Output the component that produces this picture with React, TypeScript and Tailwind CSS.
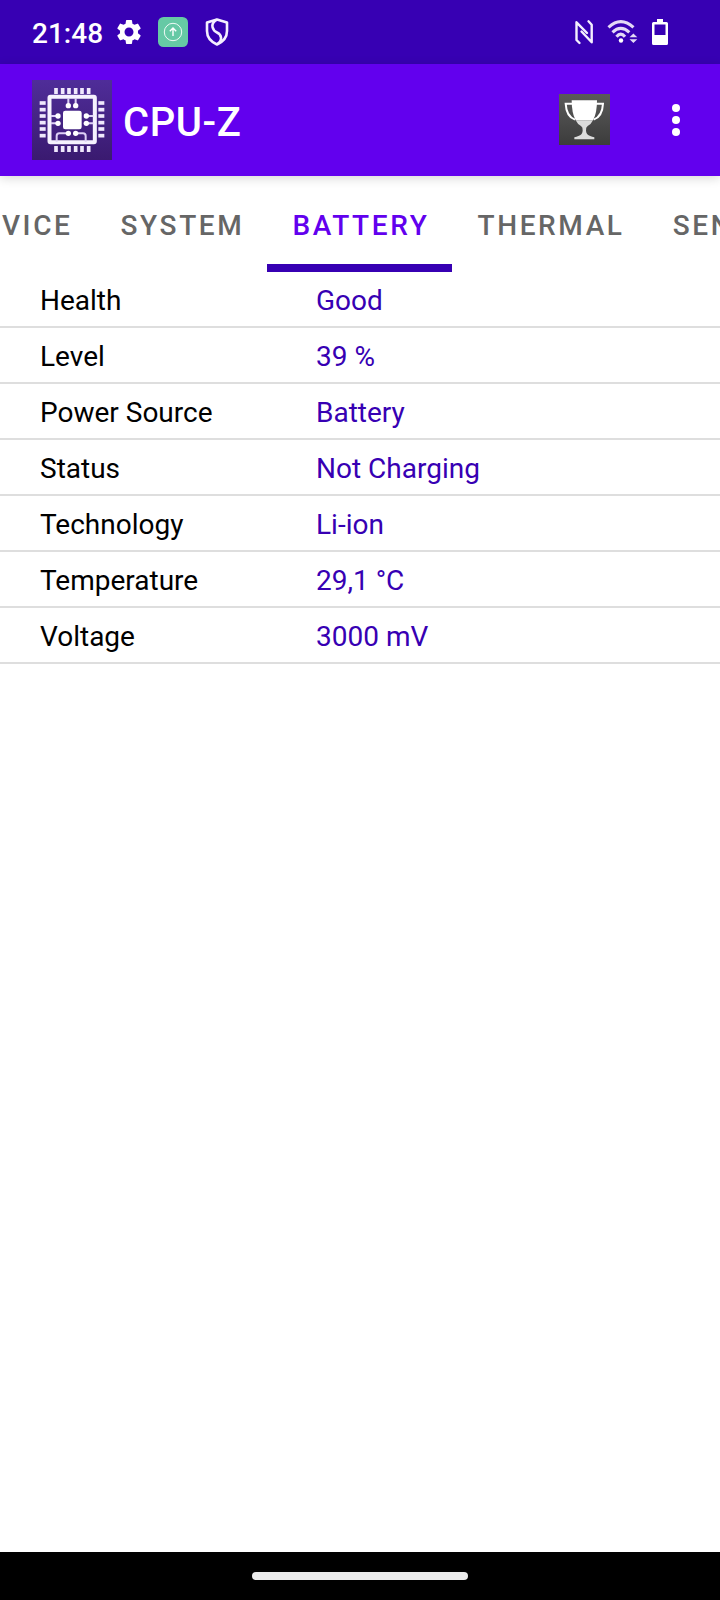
import { MdSettings } from "react-icons/md";

type Reading = {
    label: string;
    value: string;
};

const tabs = ["DEVICE", "SYSTEM", "BATTERY", "THERMAL", "SENSORS"];

const readings: Reading[] = [
    { label: "Health", value: "Good" },
    { label: "Level", value: "39 %" },
    { label: "Power Source", value: "Battery" },
    { label: "Status", value: "Not Charging" },
    { label: "Technology", value: "Li-ion" },
    { label: "Temperature", value: "29,1 °C" },
    { label: "Voltage", value: "3000 mV" },
];

const pins = [72, 92, 111, 131, 150, 170];

function ChipLogo() {
    return (
        <svg viewBox="0 0 240 240" className="h-20 w-20 shrink-0">
            <defs>
                <linearGradient id="chipBg" x1="0" y1="0" x2="0" y2="1">
                    <stop offset="0" stopColor="#4f2d99" />
                    <stop offset="1" stopColor="#3a1a70" />
                </linearGradient>
                <filter id="chipSoft">
                    <feGaussianBlur stdDeviation="2.2" />
                </filter>
            </defs>
            <rect width="240" height="240" fill="url(#chipBg)" />
            <g filter="url(#chipSoft)">
                <g fill="#efe8fc">
                    {pins.map((p) => (
                        <g key={p}>
                            <rect x={p - 5.5} y="24" width="11" height="18" />
                            <rect x={p - 5.5} y="198" width="11" height="18" />
                            <rect x="23" y={p - 8.5} width="18" height="11" />
                            <rect x="199" y={p - 8.5} width="18" height="11" />
                        </g>
                    ))}
                </g>
                <rect x="52.5" y="50.5" width="136" height="136" rx="3" fill="none" stroke="#f6f2fe" strokeWidth="12" />
                <g fill="none" stroke="#ddd0f6" strokeWidth="6">
                    <path d="M109 55v22M131 55v22M57 108h21M57 130h21M163 108h21M163 130h21" />
                    <path d="M109 160H82q-8 0-8 8v17M131 160h22q8 0 8 8v17" />
                </g>
                <g fill="#fff">
                    <rect x="93" y="92" width="56" height="56" rx="7" />
                    <circle cx="109" cy="77" r="8" />
                    <circle cx="131" cy="77" r="8" />
                    <circle cx="78" cy="108" r="8" />
                    <circle cx="78" cy="130" r="8" />
                    <circle cx="163" cy="108" r="8" />
                    <circle cx="163" cy="130" r="8" />
                    <circle cx="109" cy="160" r="8" />
                    <circle cx="131" cy="160" r="8" />
                </g>
            </g>
        </svg>
    );
}

function Trophy() {
    return (
        <svg viewBox="0 0 153 153" className="h-[51px] w-[51px]">
            <defs>
                <linearGradient id="trophyBg" x1="0" y1="0" x2="0" y2="1">
                    <stop offset="0" stopColor="#5a5a5a" />
                    <stop offset="1" stopColor="#3c3c3c" />
                </linearGradient>
            </defs>
            <rect width="153" height="153" fill="url(#trophyBg)" />
            <path d="M42 29H20q2 39 28 48M110 29h22q-2 39-28 48" fill="none" stroke="#fff" strokeWidth="6" />
            <path d="M38 19h76q0 39-12 60H50Q38 58 38 19z" fill="#fff" />
            <path d="M50 79h52q-5 11-16 17-6 4-5 14 1 12 11 15 8 3 14 5v6H46v-6q6-2 14-5 10-3 11-15 1-10-5-14-11-6-16-17z" fill="#dcdcdc" />
        </svg>
    );
}

function StatusBar() {
    return (
        <div className="flex h-16 items-center bg-[#3700b3] pl-8 text-white">
            <span className="w-[71px] pt-1 text-[28px] leading-8 font-medium">21:48</span>
            <MdSettings className="ml-[11px] h-[30px] w-[30px]" />
            <svg viewBox="0 0 30 30" className="ml-[14px] h-[30px] w-[30px]">
                <rect width="30" height="30" rx="5.5" fill="#66c9a5" />
                <g fill="none" stroke="#fff">
                    <circle cx="15" cy="15" r="8.7" strokeWidth="0.9" />
                    <path d="M15 19v-7.5M11.8 14.3l3.2-3.2 3.2 3.2" strokeWidth="1.4" />
                </g>
            </svg>
            <svg viewBox="0 0 24 30" className="ml-[17px] h-[30px] w-6" fill="none" stroke="#f4efff" strokeWidth="2.6" strokeLinejoin="round">
                <path d="M12 2.5L22 5.500V14Q22 23 12 27.500Q2 23 2 14V5.500Z" />
                <path d="M12 2.5Q6.500 6 7.500 10T12 15.500T16 20.500T12.500 27" />
            </svg>
            <div className="ml-auto flex h-[30px] items-center pr-[52px]">
                <svg viewBox="0 0 20 26" className="mr-px h-[26px] w-5" fill="none" stroke="#f4efff" strokeWidth="2.4" strokeLinecap="round" strokeLinejoin="round">
                    <path d="M5.500 24L2.500 21V3.300L13 14M14.500 2.300L17.700 5.700V23.300L7.500 12.500" />
                </svg>
                <svg viewBox="0 0 31 26" className="ml-3 h-[26px] w-[31px]" fill="none" stroke="#e4d9f6" strokeWidth="3.1">
                    <path d="M1.500 8.300Q13.700-3 26.500 8.300" />
                    <path d="M5.500 13.300Q13.700 5.500 22.300 13.300" />
                    <path d="M9.500 17.800Q13.700 12.500 18 17.800" />
                    <circle cx="14" cy="21.500" r="2.200" fill="#fff" stroke="none" />
                    <path d="M22.500 18.300h7.800l-3.900-3.800zM22.500 20.300h7.800l-3.900 3.800z" fill="#e4d9f6" stroke="none" />
                </svg>
                <svg viewBox="0 0 16 26" className="ml-[14px] h-[26px] w-4">
                    <path d="M5 0h6v3h3.500q1.500 0 1.500 1.500v20q0 1.500-1.500 1.500h-13Q0 26 0 24.500v-20Q0 3 1.500 3H5zM2.500 5.500v10.500h11v-10.500z" fill="#fff" fillRule="evenodd" />
                </svg>
            </div>
        </div>
    );
}

function AppBar() {
    return (
        <header className="flex h-28 items-center bg-[#6200ee] pl-8 text-white shadow-[0_2px_10px_rgba(0,0,0,0.16)]">
            <ChipLogo />
            <h1 className="ml-[11px] pt-1.5 text-[40px] leading-[48px] font-medium tracking-[0.6px]">CPU-Z</h1>
            <div className="ml-auto flex items-center pr-10">
                <div className="pb-px">
                    <Trophy />
                </div>
                <div className="ml-[62px] flex flex-col gap-1">
                    <span className="h-2 w-2 rounded-full bg-white" />
                    <span className="h-2 w-2 rounded-full bg-white" />
                    <span className="h-2 w-2 rounded-full bg-white" />
                </div>
            </div>
        </header>
    );
}

function TabBar({ active }: { active: string }) {
    return (
        <nav className="flex h-24 justify-center overflow-hidden pl-[54px] text-[28px] font-medium tracking-[2.62px]">
            {tabs.map((tab) => (
                <div
                    key={tab}
                    className={
                        tab === active
                            ? "shrink-0 border-b-8 border-[#3700b3] pt-[34px] pr-[22.500px] pl-[25.500px] leading-8 text-[#6200ee]"
                            : "shrink-0 pt-[34px] pr-[22.500px] pl-[25.500px] leading-8 text-[#666666]"
                    }
                >
                    {tab}
                </div>
            ))}
        </nav>
    );
}

export default function App() {
    return (
        <div className="flex h-[1600px] w-[720px] flex-col overflow-hidden bg-white font-['Roboto',sans-serif]">
            <StatusBar />
            <AppBar />
            <TabBar active="BATTERY" />
            <main className="flex-1">
                {readings.map(({ label, value }) => (
                    <div key={label} className="flex h-14 border-b-2 border-[#dedede] pt-[13px] pl-10 text-[28px] leading-8">
                        <span className="w-[276px] text-black">{label}</span>
                        <span className="text-[#3700b3]">{value}</span>
                    </div>
                ))}
            </main>
            <div className="flex h-12 items-center justify-center bg-black">
                <div className="h-2 w-[216px] rounded-full bg-[#ebebeb]" />
            </div>
        </div>
    );
}
